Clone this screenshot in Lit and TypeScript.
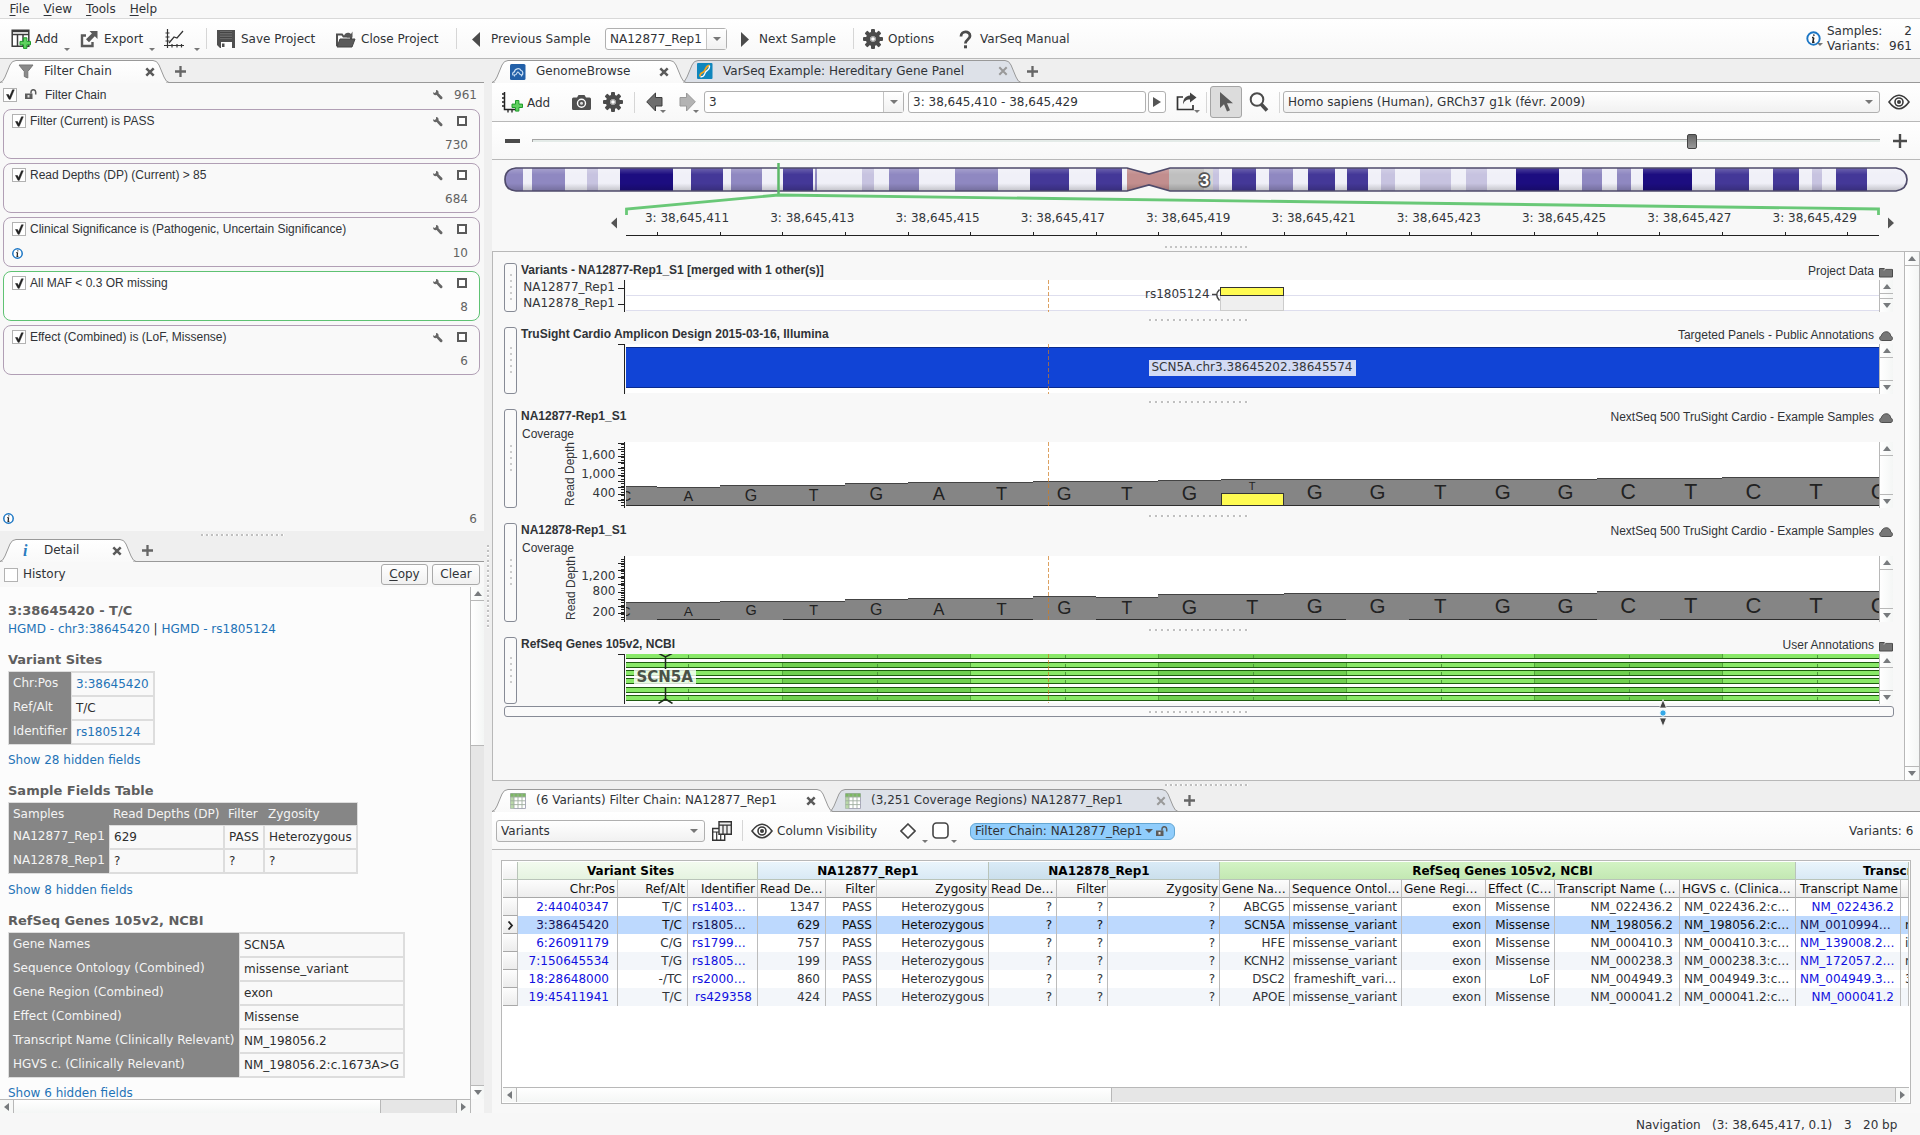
import { LitElement, html, svg, css, unsafeCSS, nothing } from "lit";
import { customElement } from "lit/decorators.js";

/* Grid tracks from a list of column start positions. */
const cols = (...s: number[]) =>
  unsafeCSS(s.slice(1).map((v, i) => `${v - s[i]}px`).join(" ") + " 1fr");

const G = "#4b4b4b";

const icon = (w: number, h: number, body: unknown, cls = "") =>
  html`<svg class="ic ${cls}" width=${w} height=${h} viewBox="0 0 ${w} ${h}">${body}</svg>`;

const gearBody = svg`
  <g fill=${G}>
    ${[0, 45, 90, 135, 180, 225, 270, 315].map(
      (a) => svg`<rect x="8" y="0" width="4" height="6" rx="1" transform="rotate(${a} 10 10)"/>`
    )}
  </g>
  <circle cx="10" cy="10" r="5" fill="none" stroke=${G} stroke-width="4.400"/>
  <circle cx="10" cy="10" r="2.800" fill="#9a9a9a"/><circle cx="10" cy="10" r="1.800" fill="#fff"/>`;

const plusGreen = (x: number, y: number) => svg`
  <path transform="translate(${x} ${y})" d="M4 .5h3.400v3.600H11v3.400H7.400v3.600H4V7.500H.5V4.100H4z" fill="#5fd15f" stroke="#1f9a2c"/>`;

const icons = {
  addTable: icon(22, 21, svg`
    <path d="M1.200 1.200h16.600v16H1.200z M1 5.500h17 M6.500 5v12 M12 5v12" fill="#fff" stroke="#3c3c3c" stroke-width="1.500"/>
    <path d="M1 1.200h17v2H1z" fill="#3c3c3c"/>${plusGreen(8.5, 8.3)}`),
  exportBig: icon(19, 18, svg`
    <path d="M6 5.500H2v10.500h10.500v-4" fill="none" stroke="#5a5a5a" stroke-width="2.400"/>
    <path d="M9.500 1H17.500v8l-2.700-2.700-5.800 5.900-3-3 5.900-5.700z" fill="#5a5a5a"/>`),
  chart: icon(21, 20, svg`
    <path d="M3.500 0v19 M0 16.500h20 M1.500 4h4 M1.500 8h4 M1.500 12h4 M8 15v3.500 M13 15v3.500 M17.500 15v3.500" stroke="#333" stroke-width="1.200" fill="none"/>
    <path d="M5 14l5-6 3 1 6-7" stroke="#333" stroke-width="1.200" fill="none"/>`),
  save: icon(18, 18, svg`
    <path d="M0 0h18v18H3l-3-3z" fill="#4f4f4f"/><path d="M3 1h12v8H3z" fill="#686868"/>
    <path d="M3 2.500h12M3 5h12M3 7.500h12" stroke="#444"/><path d="M4 12h11v6H4z" fill="#fff"/><path d="M5 13.500h2.500v3.500H5z" fill="#4f4f4f"/>`),
  folder: icon(20, 18, svg`
    <path d="M1 16V4.500h5l1.500 2H15V9" fill="none" stroke="#4f4f4f" stroke-width="2"/>
    <path d="M1 17l3-8h15l-3 8z" fill="#5a5a5a" stroke="#444"/>
    <path d="M8 6c1-4 5-4 7-2l1.500-2.500v6h-6l2-1.500" fill="#555"/>`),
  prev: icon(9, 15, svg`<path d="M8 0v15L0 7.500z" fill=${G}/>`),
  next: icon(9, 15, svg`<path d="M1 0v15l8-7.500z" fill=${G}/>`),
  gear: icon(20, 20, gearBody),
  quest: icon(13, 19, svg`<path d="M2 6.500C2 .5 11 .5 11 6c0 3.500-4.600 3.500-4.600 7.500" fill="none" stroke=${G} stroke-width="2.800"/><path d="M5 15.300h3v3H5z" fill=${G}/>`),
  info: icon(15, 15, svg`<circle cx="7.500" cy="7.500" r="6.200" fill="#fff" stroke="#1c76c4" stroke-width="1.900"/>
    <path d="M8 3.500l-.3 1.300M7.700 6.500L6.900 11.200h1.600M6 6.500h1.700" stroke="#222" stroke-width="1.600" fill="none"/>`),
  infoS: icon(11, 11, svg`<circle cx="5.500" cy="5.500" r="4.700" fill="#fff" stroke="#1c76c4" stroke-width="1.500"/>
    <path d="M5.900 2.300l-.2 1M5.600 4.700L5.100 8.300h1.200M4.300 4.700h1.300" stroke="#222" stroke-width="1.200" fill="none"/>`),
  funnel: icon(16, 15, svg`<path d="M1 1h14L9.800 7.500V14L6.300 12.500V7.500z" fill="#8a8a8a" stroke="#777"/>`),
  iTab: html`<span class="itab">i</span>`,
  gb: icon(16, 18, svg`<rect y="1" width="15.500" height="16" rx="1.500" fill="#2260a8"/>
    <path d="M3.500 12.500c-1.500-1-1-3.500 1-3.700C4.700 5.500 9.500 4.500 11 7.500c2 .3 2.500 3.500.8 4.800" fill="none" stroke="#cfe2f5" stroke-width="1.200"/>
    <path d="M4.500 13.500v-1.500c3 0 2-3 3.500-3s.8 3 3.500 3v1.500" fill="none" stroke="#cfe2f5" stroke-width="1.100"/>`),
  vs: icon(16, 18, svg`<rect y="1" width="15.500" height="16" rx="1" fill="#0f86bd"/>
    <path d="M3 14.500c0-5 3-3 4.500-5.500s2-5.500 5-5.500" fill="none" stroke="#f0a31c" stroke-width="1.800"/>
    <path d="M3.500 15c5 0 3.500-3.500 5.500-5.500s4-2 3.500-6" fill="none" stroke="#fff" stroke-width="1.300"/>`),
  sheet: icon(16, 16, svg`<path d="M.5.500h15v15H.5z" fill="#fff" stroke="#aab"/>
    <path d="M.5.500h15v3.500H.5z" fill="#7cb862"/><path d="M.5 4h3.500v11.500H.5z" fill="#b9d8a8"/>
    <path d="M.5 4h15M.5 7.800h15M.5 11.600h15M4 .5v15M8 .5v15M12 .5v15" stroke="#9fae9f" stroke-width=".9"/>`),
  close: icon(10, 10, svg`<path d="M1.300 1.300l7.400 7.400M8.700 1.300L1.300 8.700" stroke="#5a5a5a" stroke-width="2.500"/>`),
  closeDim: icon(10, 10, svg`<path d="M1.300 1.300l7.400 7.400M8.700 1.300L1.300 8.700" stroke="#999" stroke-width="2"/>`),
  plus: icon(11, 11, svg`<path d="M5.500 0v11M0 5.500h11" stroke="#666" stroke-width="2.300"/>`),
  plusDark: icon(14, 14, svg`<path d="M7 0v14M0 7h14" stroke="#4b4b4b" stroke-width="2.400"/>`),
  minus: icon(15, 4, svg`<path d="M0 0h15v4H0z" fill="#4b4b4b"/>`),
  addTrack: icon(22, 21, svg`<path d="M2.500 0v17.500H14" fill="none" stroke="#222" stroke-width="1.500"/>
    <path d="M0 2h2M0 6h2M0 10h2M0 14h2M6 18v2.500M10 18v2.500" stroke="#222" stroke-width="1.300"/>${plusGreen(9.5, 8)}`),
  camera: icon(19, 15, svg`<path d="M0 4q0-1.500 1.500-1.500H5L6.500 0h6L14 2.500h3.500Q19 2.500 19 4v9.500q0 1.500-1.500 1.500h-16Q0 15 0 13.500z" fill="#505050"/>
    <circle cx="9.500" cy="8.200" r="4" fill="none" stroke="#fff" stroke-width="1.400"/><circle cx="9.500" cy="8.200" r="1.500" fill="#ddd"/>`),
  back: icon(17, 20, svg`<path d="M9.500 1v4.500H16v8.500H9.500v5L.7 9.800z" fill="#6e6e6e" stroke="#3d3d3d"/>`),
  fwd: icon(17, 20, svg`<path d="M7.500 1v4.500H1v8.500h6.500v5l8.800-9.200z" fill="#b3b3b3" stroke="#999"/>`),
  share: icon(21, 19, svg`<path d="M7 5H1.500v12.500H17V13" fill="none" stroke="#333" stroke-width="1.700"/>
    <path d="M14 .5l6.500 5-6.500 5V7.500c-4 0-6 2-7 5 0-5 2-8.500 7-9z" fill="#444"/>`),
  pointer: icon(15, 20, svg`<path d="M1 0v16l4-3.700L8 19.500l3-1.200-3-7h6z" fill="#5a5a5a"/>`),
  lens: icon(20, 20, svg`<circle cx="8" cy="7.500" r="6.300" fill="none" stroke=${G} stroke-width="2"/><path d="M12 12l6 6.500" stroke=${G} stroke-width="3.600"/>`),
  eye: icon(22, 16, svg`<path d="M1 8Q11-5.500 21 8 11 21.500 1 8z" fill="#fff" stroke="#3c3c3c" stroke-width="1.600"/>
    <circle cx="11" cy="8" r="4" fill="none" stroke="#3c3c3c" stroke-width="1.600"/><circle cx="11" cy="8" r="2" fill="#3c3c3c"/>`),
  tables: icon(20, 20, svg`<path d="M.7 7.500h12v11.800H.7z" fill="#fff" stroke="#333" stroke-width="1.400"/><path d="M.7 11h12M4.700 11v8M8.700 11v8" stroke="#333" stroke-width="1.200"/>
    <path d="M7 .7h12.300v12.500H7z" fill="#eee" stroke="#333" stroke-width="1.400"/><path d="M7 4.200h12M11 4v9M15 4v9" stroke="#333" stroke-width="1.200"/>`),
  diamond: icon(16, 16, svg`<path d="M8 1l7 7-7 7-7-7z" fill="#fff" stroke="#444" stroke-width="1.600"/>`),
  rsq: icon(17, 17, svg`<rect x="1" y="1" width="15" height="15" rx="3.500" fill="#fff" stroke="#444" stroke-width="1.600"/>`),
  lock: icon(12, 11, svg`<path d="M0 4.500h7.500V10H0z" fill="#5c5c5c"/><path d="M2.500 6h2v2.500h-2z" fill="#ddd"/>
    <path d="M6 4.500V3q0-2.300 2.300-2.300T10.700 3v2.500" fill="none" stroke="#5c5c5c" stroke-width="1.500"/>`),
  wrench: icon(11, 11, svg`<path d="M1 3.300l1.700.8 1.300-1L4 .9C6 .9 7 2.300 6.500 4.200L10.300 8q.6 1-.3 1.900-.9.700-1.800 0L4.600 6.100C2.700 6.700 1 5.500 1 3.300z" fill="#666"/>`),
  check: html`<span class="cb">${icon(10, 11, svg`<path d="M1.500 5.500h2l1 2.300L7.500.8h1.800L5.300 10.300H4z" fill="#222" stroke="#222" stroke-width=".5"/>`)}</span>`,
  folderS: icon(14, 11, svg`<path d="M.5 10V1.500h4.500l1.200 1h7.300V10z" fill="#757575" stroke="#4a4a4a"/><path d="M5 3.500l1.500-1.800H13" stroke="#ddd" stroke-width=".8" fill="none"/>`),
  cloudS: icon(14, 10, svg`<path d="M2.500 9.500C0 9 0 5.500 2.300 5 3 1.500 6 .5 8 .8s3.500 1.700 3.700 4.200c2.300.5 2.300 4 .3 4.500z" fill="#777" stroke="#4f4f4f"/>`),
};

const tri = html`<i class="tri"></i>`;
const sep = html`<i class="sep"></i>`;

const tab = (w: number, active: boolean, ic: unknown, label: string, cls = "") => html`
  <div class="tab ${active ? "on" : ""} ${cls}" style="width:${w}px">
    <svg class="tabbg" width=${w} height="23" viewBox="0 0 ${w} 23">
      <path d="M0 22.500Q3 22 5 17L10 5Q12 .5 16 .5H${w - 16}Q${w - 12} .5 ${w - 10} 5L${w - 5} 17Q${w - 3} 22 ${w} 22.500"
        fill=${active ? "url(#tabw)" : "#dde1e8"} stroke="#999"/>
      <defs><linearGradient id="tabw" x2="0" y2="1"><stop offset="0" stop-color="#fff"/><stop offset="1" stop-color="#f9f9f9"/></linearGradient></defs>
      ${active ? nothing : svg`<path d="M0 22.500H${w}" stroke="#999"/>`}
    </svg>
    <span class="tico">${ic}</span><span class="tlab">${label}</span>
    <span class="tx">${active ? icons.close : icons.closeDim}</span>
  </div>`;

const arrow = (d: "u" | "d" | "l" | "r") => html`<i class="ar ${d}"></i>`;

const vbar = (cls = "") => html`<div class="vbar ${cls}"><b>${arrow("u")}</b><s></s><b>${arrow("d")}</b></div>`;

/* ---------- data ---------- */
const filters = [
  { t: "Filter (Current) is PASS", n: 730 },
  { t: "Read Depths (DP) (Current) > 85", n: 684 },
  { t: "Clinical Significance is (Pathogenic, Uncertain Significance)", n: 10, info: true },
  { t: "All MAF < 0.3 OR missing", n: 8, sel: true },
  { t: "Effect (Combined) is (LoF, Missense)", n: 6 },
];

const X0 = 626;
const X1 = 1879;
const BW = 62.65;
const bound = (k: number) => Math.round(657.2 + BW * (k - 1));
const bases = "CAGTGATGTGTGGTGGCTCTC".split("");

const bands: [number, number, string][] = [
  [504, 523, "l"], [532, 565, "l"], [587, 598, "p"], [620, 673, "d"], [691, 723, "m"], [731, 762, "l"],
  [783, 813, "m"], [815, 817, "l"], [862, 874, "p"], [889, 919, "l"], [955, 998, "l"], [1030, 1069, "m"],
  [1096, 1122, "m"], [1127, 1169, "c"], [1169, 1204, "g"], [1204, 1213, "g2"], [1213, 1219, "p"],
  [1232, 1256, "m"], [1269, 1293, "l"], [1308, 1335, "m"], [1347, 1368, "m"], [1381, 1395, "p"],
  [1420, 1451, "p"], [1466, 1487, "p"], [1516, 1559, "d"], [1582, 1602, "l"], [1617, 1631, "l"],
  [1643, 1692, "d"], [1715, 1749, "m"], [1773, 1799, "m"], [1812, 1822, "p"], [1836, 1867, "m"],
];
const bandFill: Record<string, string> = {
  l: "#8f88c1", p: "#c7c3e0", d: "#1c0d80", m: "#443898", c: "#c28e8e", g: "#bfbfbf", g2: "#d5d5d5",
};

const head = ["Chr:Pos", "Ref/Alt", "Identifier", "Read De…", "Filter", "Zygosity", "Read De…", "Filter", "Zygosity",
  "Gene Na…", "Sequence Ontol…", "Gene Regi…", "Effect (C…", "Transcript Name (…", "HGVS c. (Clinica…", "Transcript Name", ""];
const rows = [
  ["2:44040347", "T/C", "rs1403…", "1347", "PASS", "Heterozygous", "?", "?", "?", "ABCG5", "missense_variant", "exon", "Missense", "NM_022436.2", "NM_022436.2:c…", "NM_022436.2", ""],
  ["3:38645420", "T/C", "rs1805…", "629", "PASS", "Heterozygous", "?", "?", "?", "SCN5A", "missense_variant", "exon", "Missense", "NM_198056.2", "NM_198056.2:c…", "NM_0010994…", "m"],
  ["6:26091179", "C/G", "rs1799…", "757", "PASS", "Heterozygous", "?", "?", "?", "HFE", "missense_variant", "exon", "Missense", "NM_000410.3", "NM_000410.3:c…", "NM_139008.2…", "i"],
  ["7:150645534", "T/G", "rs1805…", "199", "PASS", "Heterozygous", "?", "?", "?", "KCNH2", "missense_variant", "exon", "Missense", "NM_000238.3", "NM_000238.3:c…", "NM_172057.2…", "m"],
  ["18:28648000", "-/TC", "rs2000…", "860", "PASS", "Heterozygous", "?", "?", "?", "DSC2", "frameshift_vari…", "exon", "LoF", "NM_004949.3", "NM_004949.3:c…", "NM_004949.3…", "3"],
  ["19:45411941", "T/C", "rs429358", "424", "PASS", "Heterozygous", "?", "?", "?", "APOE", "missense_variant", "exon", "Missense", "NM_000041.2", "NM_000041.2:c…", "NM_000041.2", ""],
];

/* ---------- tracks ---------- */
const cursorLine = (y0: number, y1: number) =>
  svg`<path d="M1048.500 ${y0}V${y1}" stroke="#cf7a20" stroke-opacity=".7" stroke-dasharray="4 2"/>`;

const axisSvg = (y: number, h: number, body: unknown) =>
  html`<svg class="axis" width="109" height=${h} viewBox="517 ${y} 109 ${h}">
    <path d="M624.500 ${y}V${y + h}" stroke="#222" shape-rendering="crispEdges"/>${body}</svg>`;

const plotSvg = (y: number, h: number, body: unknown) =>
  html`<svg class="plot" width="1253" height=${h} viewBox="${X0} ${y} 1253 ${h}">${body}</svg>`;

const track = (title: string, sub: string, right: string, ic: unknown, axis: unknown, plot: unknown) => html`
  <div class="track">
    <div class="handle"><i></i></div>
    <div class="tbody">
      <div class="thead"><b>${title}</b><span class="tright">${right}${ic}</span></div>
      ${sub ? html`<div class="tsub">${sub}</div>` : nothing}
      <div class="trow">${axis}${plot}${vbar("mini")}</div>
    </div>
  </div>`;

const covAxis = (y: number, bottom: number, step: number, majors: [string, number][], ticks: number[]) =>
  axisSvg(y, 66, svg`
    <g stroke="#222" shape-rendering="crispEdges">
      ${Array.from({ length: Math.floor((bottom - y) / step) }, (_, i) => svg`<path d="M621 ${Math.round(bottom - i * step) - 0.5}H624"/>`)}
      ${ticks.map((t) => svg`<path d="M618 ${t + 0.5}H624"/>`)}
    </g>
    ${majors.map(([l, b]) => svg`<text class="dv" x="615.500" y=${b} text-anchor="end">${l}</text>`)}
    <text class="lib" transform="translate(${y < 500 ? 574 : 575} ${y + 64}) rotate(-90)">Read Depth</text>`);

const coverage = (y: number, tops: number[], bottom: number, small: boolean) =>
  plotSvg(y, 66, svg`
    <rect x=${X0} y=${y} width="1253" height="64" fill="#fff"/>
    <rect x=${X0} y=${y + 64} width="1253" height="2" fill="#f8f8f8"/>
    <g shape-rendering="crispEdges">
      ${tops.map((t, k) => {
        const a = k === 0 ? X0 : bound(k);
        const b = Math.min(X1, bound(k + 1));
        return svg`<rect x=${a} y=${t} width=${b - a} height=${bottom - t} fill="#858585"/>
          <rect x=${a} y=${t} width=${b - a} height="1" fill="#444"/>
          ${!small || ![0, 2, 7, 12, 16].includes(k) ? svg`<rect x=${a} y=${bottom - 1} width=${b - a} height="1" fill="#2e2e2e"/>` : nothing}`;
      })}
    </g>
    ${cursorLine(y, y + 64)}
    ${tops.map((t, k) => {
      if (!small && k === 10) return nothing;
      const fs = (bottom - t) * 0.76;
      return svg`<text class="base" x=${625.7 + BW * k} y=${(bottom + t) / 2 + fs * 0.33} style="font-size:${fs}px">${bases[k]}</text>`;
    })}
    ${small ? nothing : svg`
      <text class="base" x="1252" y="490" style="font-size:11px">T</text>
      <rect x="1221.500" y="493.500" width="62" height="12" fill="#fffb52" stroke="#333"/>`}`);

const tops3 = [486, 487, 485, 485, 483, 482, 482, 481, 481, 480, 479, 479, 479, 479, 479, 479, 478, 478, 477, 477, 477];
const tops4 = [602, 602, 601, 601, 599, 598, 598, 596, 597, 594, 594, 593, 593, 593, 593, 593, 591, 591, 591, 591, 591];
const geneRows: [number, number][] = [[653, 659], [662, 668], [670, 676], [678, 684], [687, 693], [695, 701]];

@customElement("app-root")
export class AppRoot extends LitElement {
  static styles = css`
    :host { display: flex; flex-direction: column; width: 1920px; height: 1135px; overflow: hidden;
      background: #f7f7f7; color: #303337; font: 12px "DejaVu Sans", sans-serif; line-height: 16px; }
    * { box-sizing: border-box; }
    svg { display: block; flex: none; }
    .dv { font: 12px "DejaVu Sans", sans-serif; fill: #33363a; }
    .lib { font: 12px "Liberation Sans", sans-serif; fill: #33363a; }
    .base { font-family: "Liberation Sans", sans-serif; fill: #222; text-anchor: middle; }
    .menu { height: 19px; flex: none; display: flex; gap: 14px; padding-left: 9.500px; line-height: 18px; border-bottom: 1px solid #d9d9d9; background: #f8f8f8; }
    u { text-decoration: underline; text-underline-offset: 2px; text-decoration-thickness: 1px; }
    .bar { display: grid; align-items: center; white-space: nowrap; background: linear-gradient(#fff, #f8f8f8); border-bottom: 1px solid #b8b8b8; }
    .bar > * { justify-self: start; }
    .bar > span { padding-top: 1px; }
    .top { height: 40px; flex: none; grid-template-columns: ${cols(0, 11, 35, 64, 80, 104, 149, 164, 194, 206, 217, 241, 336, 361, 456, 472, 491, 605, 740, 759, 853, 863, 888, 959, 980, 1806, 1827)}; }
    .top > .ic { margin-top: 1px; }
    .tri { width: 0; height: 0; border: 3px solid transparent; border-top-color: #777; border-bottom: 0; margin-top: 21px; }
    .sep { width: 1px; height: 21px; background: #d6d6d6; }
    .totals { display: grid; grid-template-columns: 51px 34px; line-height: 15px; }
    .totals span:nth-child(even) { text-align: right; }
    .totals { padding-top: 1px; }
    .infot { display: flex; }
    .infot .tri { margin: 12px 0 0 -4px; }
    .combo { display: flex; align-items: center; height: 22px; border: 1px solid #b0b0b0; border-radius: 3px; background: #fff; padding-left: 4px; }
    .combo span { flex: 1; overflow: hidden; }
    .combo b { width: 20px; align-self: stretch; display: flex; align-items: center; justify-content: center; border-left: 1px solid #c4c4c4; background: linear-gradient(#fff, #f1f1f1); }
    .combo.flat { background: linear-gradient(#fff, #f1f1f1); }
    .combo.flat b { border: 0; background: none; }
    .combo b .tri { border-width: 4px; border-bottom: 0; border-top-color: #777; margin: 0; }
    .w122 { width: 122px; } .w200 { width: 200px; } .w238 { width: 238px; } .w597 { width: 597px; } .w209 { width: 209px; }

    .main { flex: none; display: flex; height: 1054px; background: #efefef; }
    .left { width: 484px; display: flex; flex-direction: column; }
    .vsplit { width: 8px; display: flex; justify-content: center; padding-top: 486px; }
    .vsplit i { width: 2px; height: 84px; background: repeating-linear-gradient(#c0c0c0 0 2px, #fff 2px 3px, transparent 3px 5px); }
    .right { width: 1428px; display: flex; flex-direction: column; }
    .strip { height: 24px; flex: none; display: flex; align-items: center; background: linear-gradient(#999, #999) 0 23px / 100% 1px no-repeat #efefef; }
    .strip.sm { height: 23px; background-position: 0 22px; }
    .tab { position: relative; height: 23px; align-self: flex-end; display: flex; align-items: center; }
    .tab.on { z-index: 1; background: linear-gradient(#f9f9f9, #f9f9f9) 3px 22px / calc(100% - 6px) 1px no-repeat; }
    .tabbg { position: absolute; left: 0; top: 0; overflow: visible; }
    .tico, .tlab, .tx { position: relative; }
    .tico { width: 44px; padding-left: 18px; }
    .tlab { flex: 1; white-space: nowrap; padding-bottom: 1px; }
    .tx { padding-right: 14px; }
    .tab.gbt .tx, .tab.ft .tx { padding-right: 17px; }
    .tab.vt .tico { width: 41px; padding-left: 15px; } .tab.vt .tx { padding-right: 13px; }
    .tab.ct .tico { width: 42px; padding-left: 16px; } .tab.ct .tx { padding-right: 12px; }
    .strip > .ic { margin-left: 6px; }
    .ovl { margin-left: -4px; }
    .itab { display: block; font: italic bold 16px "Liberation Serif", serif; color: #2a7bc0; padding-left: 5px; }

    .chain { height: 448px; background: #f8f8f8; display: flex; flex-direction: column; padding: 0 4px 0 3px; }
    .root { height: 26px; padding-bottom: 3px; display: flex; align-items: center; font-family: "Liberation Sans", sans-serif; }
    .cb { display: flex; width: 14px; height: 14px; border: 1px solid #b2b2b2; background: #fff; align-items: center; justify-content: center; }
    .root .lk { margin: 0 8px 0 8px; }
    .root .nm { flex: 1; }
    .num { font-family: "DejaVu Sans", sans-serif; color: #626262; }
    .root .num { width: 34px; text-align: right; margin-right: 3px; }
    .card { height: 50px; margin-bottom: 4px; border: 1px solid #b19fb5; border-radius: 8px; background: #f9f9f9; padding: 0 9px 0 8px; display: flex; flex-direction: column; font-family: "Liberation Sans", sans-serif; }
    .card.sel { border-color: #5fc273; background: #fdfdfd; }
    .c1 { display: flex; align-items: center; height: 22px; }
    .c1 .nm { flex: 1; padding-left: 4px; }
    .sqr { width: 10px; height: 10px; border: 2px solid #5a5a5a; background: #fff; margin: 0 3px 0 14px; }
    .c2 { display: flex; justify-content: space-between; align-items: center; height: 24px; margin-top: 1px; padding-right: 2px; }
    .foot { margin-top: auto; display: flex; justify-content: space-between; height: 23px; padding-right: 3px; }
    .foot .ic { margin-top: 5px; } .foot .num { margin-top: 3px; }
    .hsplit { height: 8px; flex: none; display: flex; justify-content: center; align-items: center; }
    .hsplit i, .tdots i { height: 2px; width: 83px; background: repeating-linear-gradient(90deg, #c0c0c0 0 2px, #fff 2px 3px, transparent 3px 5px); }
    .hist { height: 25px; flex: none; background: #f8f8f8; display: flex; align-items: center; padding: 0 4px 0 4px; }
    .hist label { flex: 1; padding-left: 5px; margin-top: -1px; }
    .btn { height: 21px; border: 1px solid #a9a9a9; border-radius: 3px; background: linear-gradient(#fff, #f0f0f0); text-align: center; line-height: 19px; margin: -1px 0 0 4px; }
    .bcopy { width: 47px; } .bclear { width: 48px; }
    .dwrap { display: flex; height: 512px; flex: none; }
    .doc { width: 470px; background: #fcfcfc; overflow: hidden; padding: 15px 0 0 8px; line-height: 18px; color: #2e2e2e; }
    .doc h3 { margin: 13px 0 2px; font-size: 13px; line-height: 18px; color: #5e5e5e; }
    .doc h3.first { margin: 0; }
    a { color: #1f73b7; }
    .more { margin-top: 6px; } .more.m7 { margin-top: 7px; }
    .dt { display: grid; border: 1px solid #ddd; width: max-content; grid-auto-rows: 24px; }
    .dt.v2 { grid-template-columns: 62px 83px; } .dt.v6 { grid-template-columns: 230px 165px; }
    .dt.s { grid-template-columns: 100px 115px 40px 93px; grid-template-rows: 22px; }
    .dt > * { padding-left: 4px; line-height: 22px; white-space: nowrap; }
    .dt > .h { background: #868686; color: #f4f4f4; }
    .dt > .d { border: 1px solid #ddd; background: #f9f9f9; }
    .vbar { width: 14px; flex: none; display: flex; flex-direction: column; border-left: 1px solid #b8b8b8; background: linear-gradient(90deg, #fff, #f4f6f5); }
    .vbar b { height: 14px; display: flex; align-items: center; justify-content: center; }
    .vbar b:first-child { border-bottom: 1px solid #b8b8b8; } .vbar b:last-child { border-top: 1px solid #b8b8b8; }
    .vbar s { flex: 1; }
    .vbar.doc-v s { background: linear-gradient(#b8b8b8, #b8b8b8) 0 144px / 100% 1px no-repeat, linear-gradient(transparent 144px, #e6e6e6 144px); }
    .ar { width: 0; height: 0; border: 4px solid transparent; }
    .ar.u { border-bottom: 5px solid #777a7d; border-top: 0; } .ar.d { border-top: 5px solid #777a7d; border-bottom: 0; }
    .ar.l { border-right: 5px solid #777a7d; border-left: 0; } .ar.r { border-left: 5px solid #777a7d; border-right: 0; }
    .hbar { height: 14px; flex: none; display: flex; border-top: 1px solid #b8b8b8; background: #f7f8f7; }
    .hbar b { width: 14px; display: flex; align-items: center; justify-content: center; }
    .hbar b:first-child { border-right: 1px solid #b8b8b8; } .hbar b:last-child { border-left: 1px solid #b8b8b8; }
    .hbar s { border-right: 1px solid #b8b8b8; background: linear-gradient(#fff, #f4f6f5); }
    .hbar em { flex: 1; background: #e6e6e6; }
    .hbar.dh { width: 471px; border-right: 1px solid #b8b8b8; } .hbar.dh s { width: 367px; }
    .hbar.th { width: 1406px; height: 15px; } .hbar.th s { width: 595px; }
    .hfill { display: flex; background: #f8f8f8; }

    .gbar { height: 39px; flex: none; grid-template-columns: ${cols(0, 10, 35, 80, 111, 142, 154, 187, 212, 416, 656, 684, 714, 718, 757, 787, 791, 1396)}; }
    .nav { display: flex; } .nav .tri { margin: 18px 0 0 -3px; }
    .go { width: 18px; height: 22px; border: 1px solid #b0b0b0; border-radius: 3px; background: #fff; display: flex; align-items: center; justify-content: center; }
    .go i { width: 0; height: 0; border: 5px solid transparent; border-left: 8px solid #555; border-right: 0; }
    .pressed { width: 32px; height: 32px; border: 1px solid #a5a5a5; border-radius: 3px; background: #dcdcdc; display: flex; align-items: center; justify-content: center; }
    .zoom { height: 38px; flex: none; display: flex; align-items: center; padding: 0 13px; background: linear-gradient(#fff, #f8f8f8); border-bottom: 1px solid #b8b8b8; }
    .groove { flex: 1; height: 3px; margin: 0 13px 0 12px; background: #e4ebe8; border-top: 1px solid #a5a5a5; border-left: 1px solid #a5a5a5; display: flex; align-items: center; padding-left: 1154px; }
    .knob { width: 10px; height: 15px; flex: none; background: linear-gradient(#666, #999); border: 1px solid #444; border-radius: 2px; }
    .ideo { background: #f8f8f8; }
    .view { height: 530px; flex: none; display: flex; border: 1px solid #b8b8b8; background: #f8f8f8; }
    .tracks { flex: 1; padding: 11px 0 0 11px; display: flex; flex-direction: column; }
    .track { display: flex; }
    .handle { width: 13px; border: 1px solid #878b96; border-radius: 3px; background: #fafafa; display: flex; align-items: center; justify-content: center; }
    .handle i { width: 2px; height: 27px; background: repeating-linear-gradient(#ccc 0 2px, transparent 2px 6px); }
    .thead { height: 17px; display: flex; justify-content: space-between; padding-left: 4px; font: 12px/17px "Liberation Sans", sans-serif; }
    .thead b { line-height: 14px; }
    .tright { display: flex; align-items: center; gap: 5px; height: 16px; line-height: 16px; }
    .tright .ic { margin-top: 2px; }
    .tsub { height: 16px; padding-left: 5px; font: 12px/16px "Liberation Sans", sans-serif; }
    .trow { display: flex; }
    .axis { overflow: visible; }
    .tdots { height: 15px; display: flex; align-items: center; padding-left: 645px; }
    .tdots i { width: 99px; background: repeating-linear-gradient(90deg, #c0c0c0 0 2px, #fff 2px 3px, transparent 3px 6px); }
    .endbar { width: 1390px; height: 11px; margin-top: 2px; border: 1px solid #878b96; border-radius: 3px; background: #fafafa; position: relative; padding-left: 644px; display: flex; align-items: center; }
    .endbar i { height: 2px; width: 99px; background: repeating-linear-gradient(90deg, #c0c0c0 0 2px, #fff 2px 3px, transparent 3px 6px); }
    .resize { position: absolute; left: 1152px; top: -8px; }
    .view > .vbar { width: 15px; }

    .tbar { height: 38px; flex: none; grid-template-columns: ${cols(0, 4, 220, 250, 259, 285, 408, 430, 440, 459, 469, 478, 1357)}; }
    .pill { display: flex; align-items: center; gap: 3px; height: 17px; width: 205px; margin-top: 1px; padding-left: 4px; border: 1px solid #64a6d2; border-radius: 6px; background: #90cdfc; }
    .pill .tri { margin: 0; border-width: 4px; border-bottom: 0; border-top-color: #555; }
    .grid { flex: none; margin: 10px 0 0 9px; width: 1410px; height: 244px; border: 1px solid #b8b8b8; background: #fff; padding: 1px; display: flex; flex-direction: column; overflow: hidden; }
    .below { flex: 1; background: #f8f8f8; min-height: 0; }
    .gh, .gr { display: grid; overflow: hidden; width: 1406px; flex: none; }
    .gh { grid-template-columns: 15px 240px 231px 231px 576px 113px; height: 18px; }
    .gh div { text-align: center; font-weight: bold; color: #000; line-height: 18px; border: 1px solid #b9c4b9; border-width: 0 1px 1px 0; white-space: nowrap; overflow: hidden; padding-right: 10px; }
    .gh .g1 { padding-right: 14px; }
    .gr { grid-template-columns: 15px 100px 70px 70px 68px 51px 112px 68px 51px 112px 70px 112px 84px 69px 125px 116px 105px 8px; height: 18px; }
    .gr div { text-align: right; line-height: 18px; border-right: 1px solid #bcbcbc; padding-right: 4px; white-space: nowrap; overflow: hidden; }
    .gr div.el { text-align: left; padding: 0 0 0 4px; }
    .gr.hd div { color: #111; background: linear-gradient(#fdfdfd, #ededed); border-bottom: 1px solid #a8a8a8; padding-right: 1px; line-height: 18px; }
    .gr.hd div.el { padding-left: 2px; }
    .gr div.rh, .gr.hd div.rh { background: linear-gradient(#fdfdfd, #ececec); border-bottom: 1px solid #a8a8a8; padding: 5px 0 0 4px; }
    .gr div.c0 { padding-right: 8px; } .gr div.c1x, .gr div.c2x, .gr div.c3x { padding-right: 5px; }
    .gr div.c13 { padding-right: 6px; } .gr div.c15 { padding-right: 6px; }
    .gr.hd div.c0, .gr.hd div.c1x, .gr.hd div.c2x, .gr.hd div.c3x, .gr.hd div.c15 { padding-right: 2px; }
    .gr.alt { background: #f3f6fa; } .gr.cur { background: #bdd9fe; color: #111; }
    .gr .lk2 { color: #1010e0; } .gr.cur .lk2 { color: #14145a; }
    .g1 { background: linear-gradient(#f3fbef, #e5f3e0); } .g2 { background: linear-gradient(#eaf5fc, #d9e9f4); }
    .g3 { background: linear-gradient(#daebf7, #cbdfec); } .g4 { background: linear-gradient(#d3f3c4, #c3e8b3); }
    .gh .g0 { background: linear-gradient(#fff, #f0f0f0); }
    .gh .gl { text-align: left; padding-left: 67px; padding-right: 0; }
    .fill { flex: 1; }
    .status { flex: 1; display: grid; grid-template-columns: 76px 132px 19px 57px; justify-content: start; padding: 4px 0 0 1636px; white-space: nowrap; background: #f7f7f7; }
  `;

  private ideogram() {
    const shape = "M516 168H1127L1149 174 1170 168H1896Q1907 170 1907 179.500T1896 191H1170L1149 185 1127 191H516Q505 190 505 179.500T516 168Z";
    return html`<svg class="ideo" width="1428" height="91" viewBox="492 160 1428 91">
      <defs>
        <clipPath id="cp"><path d=${shape}/></clipPath>
        <linearGradient id="gl" x2="0" y2="1"><stop offset="0" stop-color="#fff" stop-opacity=".25"/><stop offset=".3" stop-color="#fff" stop-opacity="0"/><stop offset=".65" stop-color="#000" stop-opacity="0"/><stop offset="1" stop-color="#000" stop-opacity=".22"/></linearGradient>
      </defs>
      <g clip-path="url(#cp)" shape-rendering="crispEdges">
        <rect x="504" y="167" width="1404" height="25" fill="#f0f0f8"/>
        ${bands.map(([a, b, c]) => svg`<rect x=${a} y="167" width=${b - a} height="25" fill=${bandFill[c]}/>`)}
        <rect x="504" y="167" width="1404" height="25" fill="url(#gl)"/>
      </g>
      <path d=${shape} fill="none" stroke="#4f4b6b" stroke-width="1.700"/>
      <text x="1204.500" y="185.500" text-anchor="middle" style="font:bold 17px 'Liberation Sans',sans-serif;paint-order:stroke" fill="#fff" stroke="#555" stroke-width="3.500" stroke-linejoin="round">3</text>
      <path d="M778.500 163V195.500" stroke="#5cb968" stroke-width="2.500" fill="none"/>
      <path d="M626.500 215V209L778.500 195 1878.500 209V215" fill="none" stroke="#69c877" stroke-width="2.800"/>
      ${Array.from({ length: 10 }, (_, k) => svg`<text class="dv" x=${687 + 125.3 * k} y="222" text-anchor="middle">3: 38,645,${411 + 2 * k}</text>`)}
      <g stroke="#222" shape-rendering="crispEdges">
        <path d="M626 235.500H1879"/>
        ${Array.from({ length: 20 }, (_, k) => svg`<path d="M${Math.round(657 + BW * k) + 0.5} 232V235"/>`)}
      </g>
      <path d="M617 217.500V228.500L611 223zM1888 217.500V228.500L1894 223z" fill="#555"/>
      ${Array.from({ length: 17 }, (_, k) => svg`<rect x=${1165 + k * 5} y="246" width="2" height="2" fill="#c4c4c4"/>`)}
    </svg>`;
  }

  private gaxis(y: number) {
    return axisSvg(y, 50, svg`<path d="M618 ${y + 0.5}H624" stroke="#222"/>`);
  }

  private trackList() {
    const dots = html`<div class="tdots"><i></i></div>`;
    return html`
      ${track("Variants - NA12877-Rep1_S1 [merged with 1 other(s)]", "", "Project Data", icons.folderS,
        axisSvg(280, 32, svg`<path d="M618 288.500H624M618 304.500H624" stroke="#222" shape-rendering="crispEdges"/>
          <text class="dv" x="615" y="291" text-anchor="end">NA12877_Rep1</text><text class="dv" x="615" y="307" text-anchor="end">NA12878_Rep1</text>`),
        plotSvg(280, 32, svg`<rect x=${X0} y="280" width="1253" height="31" fill="#fff"/>
          <path d="M626 295.500H1879M626 310.500H1879" stroke="#dedeee"/>${cursorLine(280, 312)}
          <rect x="1220.500" y="295.500" width="63" height="15" fill="#efefef" stroke="#ccc"/>
          <rect x="1220.500" y="287.500" width="63" height="8" fill="#fffb52" stroke="#333"/>
          <text class="dv" x="1145" y="298">rs1805124</text>
          <path d="M1212 294.500H1216.500M1219.500 289.500Q1214 295 1219.500 300.500" fill="none" stroke="#444" stroke-width="1.500"/>`))}
      ${dots}
      ${track("TruSight Cardio Amplicon Design 2015-03-16, Illumina", "", "Targeted Panels - Public Annotations", icons.cloudS,
        this.gaxis(344),
        plotSvg(344, 50, svg`<rect x=${X0} y="344" width="1253" height="49" fill="#fff"/>
          <rect x=${X0} y="347" width="1253" height="41" fill="#1144d6"/>
          <path d="M626 347.500H1879M626 387.500H1879" stroke="#0a2b8f"/>${cursorLine(344, 394)}
          <rect x="1149" y="360" width="207" height="16" fill="#d3dbf5"/>
          <text class="dv" x="1151.500" y="371">SCN5A.chr3.38645202.38645574</text>`))}
      ${dots}
      ${track("NA12877-Rep1_S1", "Coverage", "NextSeq 500 TruSight Cardio - Example Samples", icons.cloudS,
        covAxis(442, 506, 3.2, [["1,600", 459], ["1,000", 478], ["400", 497]], [443, 449, 456, 462, 468, 475, 481, 487, 494, 500]),
        coverage(442, tops3, 506, false))}
      ${dots}
      ${track("NA12878-Rep1_S1", "Coverage", "NextSeq 500 TruSight Cardio - Example Samples", icons.cloudS,
        covAxis(556, 620, 2.4, [["1,200", 580], ["800", 595], ["200", 616]], [563, 570, 577, 584, 592, 599, 606, 613]),
        coverage(556, tops4, 620, true))}
      ${dots}
      ${track("RefSeq Genes 105v2, NCBI", "", "User Annotations", icons.folderS,
        this.gaxis(654),
        plotSvg(654, 50, svg`<rect x=${X0} y="654" width="1253" height="49" fill="#fff"/>
          <g shape-rendering="crispEdges">
          ${geneRows.map(([a, b]) => svg`
            <rect x=${X0} y=${a} width="1253" height=${b - a} fill="#89e868"/>
            ${[782, 1158, 1534].map((x) => svg`<rect x=${x} y=${a} width="188" height=${b - a} fill="#70d050"/><rect x=${x} y=${a} width="1" height=${b - a} fill="#55a53d"/><rect x=${x + 188} y=${a} width="1" height=${b - a} fill="#55a53d"/>`)}
            ${[688, 877, 1065, 1253, 1441, 1629, 1817].map((x) => svg`<rect x=${x} y=${a + 2} width="1" height="3" fill="#4f9a3c"/>`)}
            <rect x=${X0} y=${a} width="1253" height="1" fill="#1f5c10"/><rect x=${X0} y=${b - 1} width="1253" height="1" fill="#1f5c10"/>`)}
          </g>
          ${cursorLine(654, 703)}
          <path d="M665.500 656V669M665.500 687V700M659 653.500L665.500 657 672 653.500M658.500 703.500L665.500 699 672.500 703.500" fill="none" stroke="#1d2b1a" stroke-width="1.500"/>
          <rect x="634" y="670" width="62" height="17" fill="#fff" fill-opacity=".8"/>
          <text x="636.500" y="682" style="font:bold 15px 'DejaVu Sans',sans-serif" fill="#4a5248">SCN5A</text>`))}
      <div class="endbar"><i></i>
        <svg class="resize" width="12" height="28" viewBox="0 0 12 28">
          <path d="M6 .5L9.500 9h-7zM6 27.500L9.500 19h-7z" fill="#444" stroke="#fff" stroke-width=".8"/><circle cx="6" cy="14" r="3.200" fill="#35a9e8" stroke="#fff"/></svg>
      </div>`;
  }

  private dataRow(r: string[], i: number) {
    const hd = i < 0;
    const c = hd ? "hd" : i === 1 ? "cur" : i % 2 ? "alt" : "";
    return html`<div class="gr ${c}">
      <div class="rh">${i === 1 ? icon(7, 9, svg`<path d="M1.500 .5L5 4.500 1.500 8.500" fill="none" stroke="#222" stroke-width="1.800"/>`) : nothing}</div>
      ${r.map((v, k) => {
        const el = v.endsWith("…") || k === 16 ? "el" : "";
        const cc = k === 0 ? "c0" : k < 4 ? `c${k}x` : `c${k}`;
        const lk = !hd && (k === 0 || k === 2 || k === 15) ? "lk2" : "";
        return html`<div class="${cc} ${el} ${lk}">${v}</div>`;
      })}
    </div>`;
  }

  render() {
    return html`
      <div class="menu"><span><u>F</u>ile</span><span><u>V</u>iew</span><span><u>T</u>ools</span><span><u>H</u>elp</span></div>
      <div class="bar top">
        <i></i>${icons.addTable}<span>Add</span>${tri}${icons.exportBig}<span>Export</span>${tri}${icons.chart}${tri}${sep}
        ${icons.save}<span>Save Project</span>${icons.folder}<span>Close Project</span>${sep}${icons.prev}<span>Previous Sample</span>
        <div class="combo w122"><span>NA12877_Rep1</span><b>${tri}</b></div>${icons.next}<span>Next Sample</span>${sep}
        ${icons.gear}<span>Options</span>${icons.quest}<span>VarSeq Manual</span>
        <div class="infot">${icons.info}${tri}</div>
        <div class="totals"><span>Samples:</span><span>2</span><span>Variants:</span><span>961</span></div>
      </div>
      <div class="main">
        <div class="left">
          <div class="strip">${tab(169, true, icons.funnel, "Filter Chain")}${icons.plus}</div>
          <div class="chain">
            <div class="root">${icons.check}<span class="lk">${icons.lock}</span><span class="nm">Filter Chain</span>${icons.wrench}<span class="num">961</span></div>
            ${filters.map((f) => html`<div class="card ${f.sel ? "sel" : ""}">
              <div class="c1">${icons.check}<span class="nm">${f.t}</span>${icons.wrench}<i class="sqr"></i></div>
              <div class="c2"><span>${f.info ? icons.infoS : nothing}</span><span class="num">${f.n}</span></div>
            </div>`)}
            <div class="foot">${icons.infoS}<span class="num">6</span></div>
          </div>
          <div class="hsplit"><i></i></div>
          <div class="strip sm">${tab(136, true, icons.iTab, "Detail")}${icons.plus}</div>
          <div class="hist"><span class="cb"></span><label>History</label><div class="btn bcopy"><u>C</u>opy</div><div class="btn bclear">Clear</div></div>
          <div class="dwrap">
            <div class="doc">
              <h3 class="first">3:38645420 - T/C</h3>
              <div><a>HGMD - chr3:38645420</a> | <a>HGMD - rs1805124</a></div>
              <h3>Variant Sites</h3>
              <div class="dt v2">
                <div class="h">Chr:Pos</div><div class="d"><a>3:38645420</a></div>
                <div class="h">Ref/Alt</div><div class="d">T/C</div>
                <div class="h">Identifier</div><div class="d"><a>rs1805124</a></div>
              </div>
              <div class="more"><a>Show 28 hidden fields</a></div>
              <h3>Sample Fields Table</h3>
              <div class="dt s">
                ${["Samples", "Read Depths (DP)", "Filter", "Zygosity"].map((h) => html`<div class="h">${h}</div>`)}
                <div class="h">NA12877_Rep1</div><div class="d">629</div><div class="d">PASS</div><div class="d">Heterozygous</div>
                <div class="h">NA12878_Rep1</div><div class="d">?</div><div class="d">?</div><div class="d">?</div>
              </div>
              <div class="more m7"><a>Show 8 hidden fields</a></div>
              <h3>RefSeq Genes 105v2, NCBI</h3>
              <div class="dt v6">
                ${[["Gene Names", "SCN5A"], ["Sequence Ontology (Combined)", "missense_variant"], ["Gene Region (Combined)", "exon"],
                  ["Effect (Combined)", "Missense"], ["Transcript Name (Clinically Relevant)", "NM_198056.2"], ["HGVS c. (Clinically Relevant)", "NM_198056.2:c.1673A>G"]]
                  .map(([a, b]) => html`<div class="h">${a}</div><div class="d">${b}</div>`)}
              </div>
              <div class="more"><a>Show 6 hidden fields</a></div>
            </div>
            ${vbar("doc-v")}
          </div>
          <div class="hfill"><div class="hbar dh"><b>${arrow("l")}</b><s></s><em></em><b>${arrow("r")}</b></div></div>
        </div>
        <div class="vsplit"><i></i></div>
        <div class="right">
          <div class="strip">${tab(194, true, icons.gb, "GenomeBrowse", "gbt")}<div class="ovl">${tab(339, false, icons.vs, "VarSeq Example: Hereditary Gene Panel", "vt")}</div>${icons.plus}</div>
          <div class="bar gbar">
            <i></i>${icons.addTrack}<span>Add</span>${icons.camera}${icons.gear}${sep}
            <div class="nav">${icons.back}${tri}</div><div class="nav">${icons.fwd}${tri}</div>
            <div class="combo w200"><span>3</span><b>${tri}</b></div>
            <div class="combo w238"><span>3: 38,645,410 - 38,645,429</span></div>
            <div class="go"><i></i></div>
            <div class="nav">${icons.share}${tri}</div>${sep}
            <div class="pressed">${icons.pointer}</div>${icons.lens}${sep}
            <div class="combo flat w597"><span>Homo sapiens (Human), GRCh37 g1k (févr. 2009)</span><b>${tri}</b></div>${icons.eye}
          </div>
          <div class="zoom">${icons.minus}<div class="groove"><i class="knob"></i></div>${icons.plusDark}</div>
          ${this.ideogram()}
          <div class="view"><div class="tracks">${this.trackList()}</div>${vbar()}</div>
          <div class="hsplit"><i></i></div>
          <div class="strip sm">${tab(341, true, icons.sheet, "(6 Variants) Filter Chain: NA12877_Rep1", "ft")}<div class="ovl">${tab(349, false, icons.sheet, "(3,251 Coverage Regions) NA12877_Rep1", "ct")}</div>${icons.plus}</div>
          <div class="bar tbar">
            <i></i><div class="combo flat w209"><span>Variants</span><b>${tri}</b></div>${icons.tables}${sep}${icons.eye}<span>Column Visibility</span>
            ${icons.diamond}${tri}${icons.rsq}${tri}<i></i>
            <div class="pill"><span>Filter Chain: NA12877_Rep1</span>${tri}${icons.lock}</div><span>Variants: 6</span>
          </div>
          <div class="below">
            <div class="grid">
              <div class="gh"><div class="g0"></div><div class="g1">Variant Sites</div><div class="g2">NA12877_Rep1</div><div class="g3">NA12878_Rep1</div><div class="g4">RefSeq Genes 105v2, NCBI</div><div class="g2 gl">Transcript</div></div>
              ${this.dataRow(head, -1)}
              ${rows.map((r, i) => this.dataRow(r, i))}
              <div class="fill"></div>
              <div class="hbar th"><b>${arrow("l")}</b><s></s><em></em><b>${arrow("r")}</b></div>
            </div>
          </div>
        </div>
      </div>
      <div class="status"><span>Navigation</span><span>(3: 38,645,417, 0.1)</span><span>3</span><span>20 bp</span></div>
    `;
  }
}
